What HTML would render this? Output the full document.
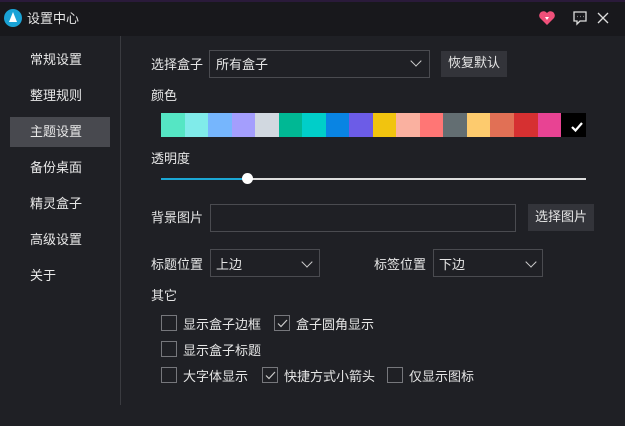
<!DOCTYPE html>
<html><head><meta charset="utf-8"><style>
*{margin:0;padding:0;box-sizing:border-box}
body{width:625px;height:426px;background:#1f2025;font-family:"Liberation Sans","Noto Sans CJK SC",sans-serif;font-size:13px;color:#e6e6e6;position:relative;overflow:hidden}
.a{position:absolute}
.t{margin-top:-2px}
.title{left:0;top:0;width:625px;height:36px;background:#18181c;border-top:2px solid #2a1a3a}
.nav{left:30px;font-size:13px;color:#e8e8e8;margin-top:-2px}
.box{border:1px solid #4a4b50;background:#1f2025}
.btn{background:#33343a;color:#e6e6e6;text-align:center}
.cb{width:16px;height:16px;border:1px solid #76777c}
.chev{width:8px;height:8px;border-right:1.5px solid #ccc;border-bottom:1.5px solid #ccc;transform:rotate(45deg)}
</style></head><body>
<div class="a title"></div>
<div class="a" style="left:4px;top:9px;width:18px;height:18px;border-radius:50%;background:#1aa3d6"></div>
<div class="a" style="left:9px;top:12px;width:0;height:0;border-left:4px solid transparent;border-right:4px solid transparent;border-bottom:10px solid #fff"></div>
<div class="a t" style="left:27px;top:10px;font-size:13px">设置中心</div>
<svg class="a" style="left:538px;top:9px" width="18" height="18" viewBox="0 0 18 18"><path d="M9 16 L2 9 A4 4 0 0 1 9 4 A4 4 0 0 1 16 9 Z" fill="#f0507a"/><path d="M7 8h4l-2 3z" fill="#fff"/></svg>
<svg class="a" style="left:572px;top:10px" width="16" height="16" viewBox="0 0 16 16" fill="none" stroke="#ddd" stroke-width="1.3"><path d="M2 2h12v9H8l-3 3v-3H2z"/><path d="M5 6.5h.5M8 6.5h.5M11 6.5h.5"/></svg>
<svg class="a" style="left:597px;top:12px" width="12" height="12" viewBox="0 0 12 12" stroke="#ddd" stroke-width="1.3"><path d="M1 1l10 10M11 1L1 11"/></svg>
<div class="a" style="left:120px;top:36px;width:1px;height:369px;background:#3a3b40"></div>
<div class="a" style="left:10px;top:117px;width:100px;height:30px;background:#48494f"></div>
<div class="a nav" style="top:51px">常规设置</div>
<div class="a nav" style="top:87px">整理规则</div>
<div class="a nav" style="top:123px">主题设置</div>
<div class="a nav" style="top:159px">备份桌面</div>
<div class="a nav" style="top:195px">精灵盒子</div>
<div class="a nav" style="top:231px">高级设置</div>
<div class="a nav" style="top:267px">关于</div>

<div class="a t" style="left:151px;top:56px">选择盒子</div>
<div class="a box" style="left:209px;top:50px;width:221px;height:28px"></div>
<div class="a t" style="left:216px;top:56px">所有盒子</div>
<div class="a chev" style="left:412px;top:57px"></div>
<div class="a btn" style="left:441px;top:51px;width:66px;height:26px;line-height:24px">恢复默认</div>
<div class="a t" style="left:151px;top:87px">颜色</div>
<div class="a" style="left:161px;top:113px;width:425px;height:24px;display:flex">
<div style="flex:1;background:#55e6c4"></div><div style="flex:1;background:#80ebea"></div><div style="flex:1;background:#76b6fd"></div><div style="flex:1;background:#a49efd"></div><div style="flex:1;background:#d1d8e0"></div><div style="flex:1;background:#00b894"></div><div style="flex:1;background:#00cec9"></div><div style="flex:1;background:#0984e3"></div><div style="flex:1;background:#6c5ce7"></div><div style="flex:1;background:#f1c40f"></div><div style="flex:1;background:#fab1a0"></div><div style="flex:1;background:#ff7675"></div><div style="flex:1;background:#636e72"></div><div style="flex:1;background:#fdcb6e"></div><div style="flex:1;background:#e17055"></div><div style="flex:1;background:#d63031"></div><div style="flex:1;background:#e84393"></div><div style="width:25px;background:#000"></div></div>
<svg class="a" style="left:570px;top:120px" width="14" height="14" viewBox="0 0 14 14" fill="none" stroke="#fff" stroke-width="2.2"><path d="M2 7l3.5 3.5L12 3"/></svg>
<div class="a t" style="left:151px;top:150px">透明度</div>
<div class="a" style="left:161px;top:178px;width:87px;height:2px;background:#1ba7d4"></div>
<div class="a" style="left:248px;top:178px;width:338px;height:2px;background:#ddd"></div>
<div class="a" style="left:242px;top:173px;width:11px;height:11px;border-radius:50%;background:#fff"></div>
<div class="a t" style="left:151px;top:209px">背景图片</div>
<div class="a box" style="left:210px;top:204px;width:306px;height:28px"></div>
<div class="a btn" style="left:528px;top:204px;width:66px;height:27px;line-height:25px">选择图片</div>
<div class="a t" style="left:151px;top:256px">标题位置</div>
<div class="a box" style="left:210px;top:249px;width:110px;height:28px"></div>
<div class="a t" style="left:216px;top:256px">上边</div>
<div class="a chev" style="left:303px;top:258px"></div>
<div class="a t" style="left:374px;top:256px">标签位置</div>
<div class="a box" style="left:433px;top:249px;width:110px;height:28px"></div>
<div class="a t" style="left:439px;top:256px">下边</div>
<div class="a chev" style="left:527px;top:258px"></div>
<div class="a t" style="left:151px;top:287px">其它</div>
<div class="a cb" style="left:161px;top:315px"></div><div class="a t" style="left:183px;top:316px">显示盒子边框</div>
<div class="a cb" style="left:274px;top:315px"></div><div class="a t" style="left:296px;top:316px">盒子圆角显示</div>
<svg class="a" style="left:277px;top:318px" width="11" height="11" viewBox="0 0 11 11" fill="none" stroke="#ccc" stroke-width="1.2"><path d="M1 5.5l3 3L10 2"/></svg>
<div class="a cb" style="left:161px;top:341px"></div><div class="a t" style="left:183px;top:342px">显示盒子标题</div>
<div class="a cb" style="left:161px;top:367px"></div><div class="a t" style="left:183px;top:368px">大字体显示</div>
<div class="a cb" style="left:262px;top:367px"></div><div class="a t" style="left:284px;top:368px">快捷方式小箭头</div>
<svg class="a" style="left:265px;top:370px" width="11" height="11" viewBox="0 0 11 11" fill="none" stroke="#ccc" stroke-width="1.2"><path d="M1 5.5l3 3L10 2"/></svg>
<div class="a cb" style="left:387px;top:367px"></div><div class="a t" style="left:409px;top:368px">仅显示图标</div>
</body></html>
